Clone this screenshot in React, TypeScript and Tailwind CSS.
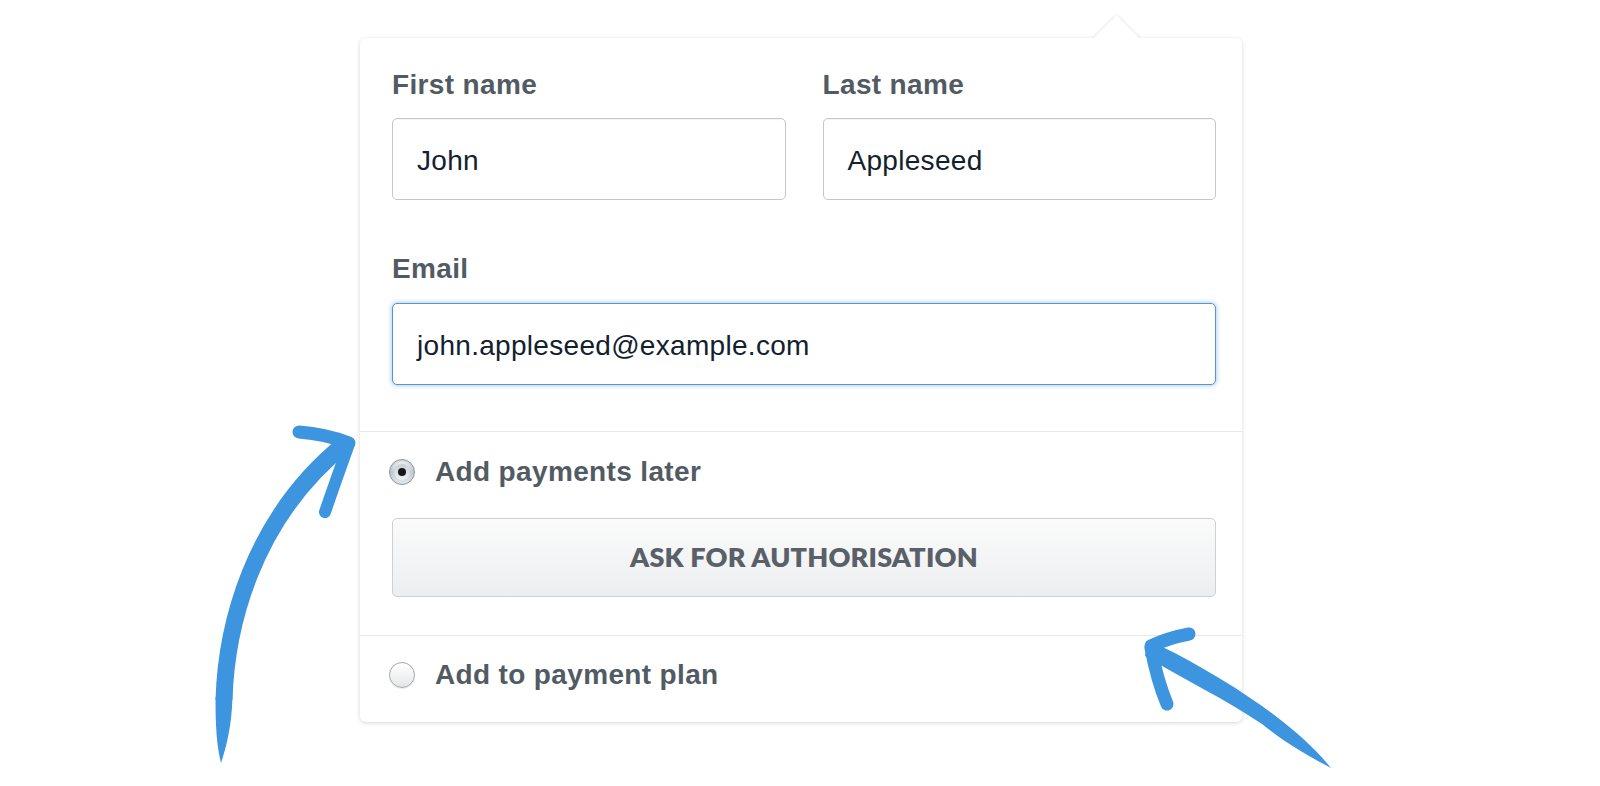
import React from "react";

const sans = { fontFamily: '"Liberation Sans", Arial, Helvetica, sans-serif' };

function Label({ children }: { children: React.ReactNode }) {
  return (
    <div className="text-[28px] leading-[32px] font-bold tracking-[0.35px] text-[#525b63]" style={sans}>
      {children}
    </div>
  );
}

function Field({ value, focused }: { value: string; focused?: boolean }) {
  return (
    <div
      className={
        focused
          ? "h-[82px] flex items-center pl-[24px] pt-[3px] rounded-[5px] border border-[#5496d2] shadow-[0_0_4px_1px_rgba(90,155,215,0.45)] bg-white text-[28px] tracking-[0.3px] text-[#13212e]"
          : "h-[82px] flex items-center pl-[24px] pt-[3px] rounded-[5px] border border-[#c3c7cc] shadow-[inset_0_1px_1px_rgba(0,0,0,0.04)] bg-white text-[28px] tracking-[0.3px] text-[#13212e]"
      }
      style={sans}
    >
      {value}
    </div>
  );
}

function Radio({ checked }: { checked?: boolean }) {
  if (checked) {
    return (
      <div className="w-[26px] h-[26px] rounded-full border border-[#8e959c] bg-gradient-to-b from-[#f2f4f6] via-[#c3cad1] to-[#e4e8ec] shadow-[inset_0_1px_2px_rgba(0,0,0,0.15)] flex items-center justify-center shrink-0">
        <div className="w-[16px] h-[16px] rounded-full bg-gradient-to-b from-[#c9d0d7] to-[#eef1f4] flex items-center justify-center">
          <div className="w-[8px] h-[8px] rounded-full bg-[#15191e]" />
        </div>
      </div>
    );
  }
  return (
    <div className="w-[26px] h-[26px] rounded-full border border-[#a3a8ad] bg-gradient-to-b from-[#ffffff] via-[#f4f4f4] to-[#e4e5e6] shadow-[0_1px_1px_rgba(0,0,0,0.08)] shrink-0" />
  );
}

export default function App() {
  return (
    <div className="relative w-[1600px] h-[786px] bg-white overflow-hidden">
      <div className="pt-[38px]">
        <div className="relative w-[882px] ml-[360px] bg-white rounded-[6px] shadow-[0_1px_4px_rgba(0,0,0,0.16)]">
          {/* caret */}
          <div className="absolute left-[740px] top-[-16px] w-[33px] h-[33px] rotate-45 bg-white shadow-[0_0_4px_rgba(0,0,0,0.14)]" />
          <div className="absolute left-[720px] top-0 w-[74px] h-[30px] bg-white" />

          <div className="relative pl-[32px] pr-[26px] pt-[31px] pb-[46px]">
            <div className="grid grid-cols-2 gap-x-[37px]">
              <div>
                <Label>First name</Label>
                <div className="mt-[17px]">
                  <Field value="John" />
                </div>
              </div>
              <div>
                <Label>Last name</Label>
                <div className="mt-[17px]">
                  <Field value="Appleseed" />
                </div>
              </div>
            </div>
            <div className="mt-[53px]">
              <Label>Email</Label>
              <div className="mt-[18px]">
                <Field value="john.appleseed@example.com" focused />
              </div>
            </div>
          </div>

          <div className="border-t border-[#e6e9ec] pl-[32px] pr-[26px] pt-[24px] pb-[38px]">
            <div className="flex items-center gap-[20px] -ml-[3px]">
              <Radio checked />
              <Label>Add payments later</Label>
            </div>
            <div
              className="mt-[30px] h-[79px] rounded-[5px] border border-[#cdd1d5] bg-gradient-to-b from-[#fbfbfb] to-[#eceef0] flex items-center justify-center text-[27px] font-extrabold tracking-[0.2px] text-[#596068]"
              style={{ fontFamily: 'Lato, "Open Sans", sans-serif' }}
            >
              ASK FOR AUTHORISATION
            </div>
          </div>

          <div className="border-t border-[#e6e9ec] pl-[32px] pr-[26px] pt-[23px] pb-[31px]">
            <div className="flex items-center gap-[20px] -ml-[3px]">
              <Radio />
              <Label>Add to payment plan</Label>
            </div>
          </div>
        </div>
      </div>

      {/* hand-drawn arrows */}
      <svg className="absolute left-0 top-0 pointer-events-none" width="1600" height="786" viewBox="0 0 1600 786">
        <g fill="none" stroke="#3d94df" strokeLinecap="round" strokeLinejoin="round">
          {/* left arrow shaft */}
          <path d="M 224 700 C 226 630, 250 520, 346 443" strokeWidth="17" strokeLinecap="butt" />
          <circle cx="346" cy="443" r="0.1" strokeWidth="15" />
          {/* left arrow head */}
          <path d="M 299 432 Q 326 434 349 443" strokeWidth="13" />
          <path d="M 349 444 Q 336 480 325 512" strokeWidth="12" />
          {/* right arrow head */}
          <path d="M 1189 634 Q 1168 638 1151 646" strokeWidth="13" />
          <path d="M 1151 648 Q 1157 680 1167 704" strokeWidth="13" />
        </g>
        <g fill="#3d94df" stroke="none">
          {/* left tail taper */}
          <path d="M 215.6 697 L 232.4 697 C 232 725, 226 748, 221 763 C 217 748, 215.2 725, 215.6 697 Z" />
          {/* right arrow shaft */}
          <path d="M 1148 640 C 1185 657, 1225 680, 1262 706 C 1290 726, 1315 748, 1331 768 C 1312 758, 1288 745, 1262 724 C 1225 699, 1185 680, 1145 656 Z" />
        </g>
      </svg>
    </div>
  );
}
